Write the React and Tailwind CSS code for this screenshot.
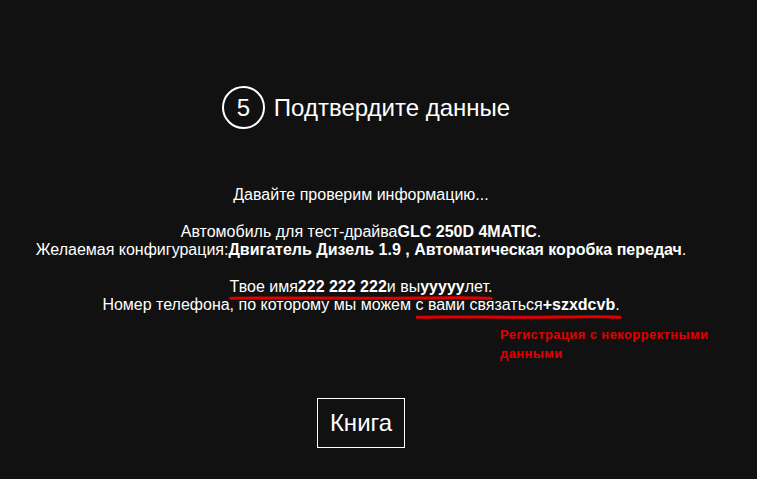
import React from 'react';

// hand-drawn red marker stroke under a piece of text
const Scribble = ({ className }) => (
    <svg className={className} viewBox="0 0 100 6" preserveAspectRatio="none">
        <path d="M1 3.2 C 20 2.4, 45 3.8, 70 3 S 95 2.6, 99 3.4" stroke="#e00000" strokeWidth="3" fill="none" strokeLinecap="round" vectorEffect="non-scaling-stroke" />
    </svg>
);

const App = () => {
    return (
        <div className="relative w-full h-[479px] bg-[#111111] text-white overflow-hidden" style={{ fontFamily: '"Liberation Sans", Arial, sans-serif' }}>
            <div className="flex flex-col items-center w-full pr-[35px] pt-[86px]">
                {/* step header */}
                <div className="flex items-center gap-[9px] ml-[10px]">
                    <div className="w-[43px] h-[43px] rounded-full border-2 border-white flex items-center justify-center text-[24px] leading-none">
                        5
                    </div>
                    <h1 className="text-[24px] leading-[28px] font-normal">Подтвердите данные</h1>
                </div>

                <div className="mt-[57px] text-center text-[16px] leading-[18.4px]">
                    <p>Давайте проверим информацию...</p>
                    <br />
                    <p>Автомобиль для тест-драйва<b>GLC 250D 4MATIC</b>.</p>
                    <p>Желаемая конфигурация:<b>Двигатель Дизель 1.9 , Автоматическая коробка передач</b>.</p>
                    <br />
                    <p>
                        <span className="relative inline-block">
                            Твое имя<b>222 222 222</b>и вы<b>yyyyy</b>лет.
                            <Scribble className="absolute left-[-2px] bottom-[-5px] h-[6px] w-[calc(100%+3px)]" />
                        </span>
                    </p>
                    <p>
                        Номер телефона, по которому мы можем{' '}
                        <span className="relative inline-block">
                            с вами связаться<b>+szxdcvb</b>.
                            <Scribble className="absolute left-0 bottom-[-5px] h-[6px] w-[calc(100%+3px)]" />
                        </span>
                    </p>
                </div>

                <button className="mt-[83px] w-[88px] h-[50px] border border-white text-[24px] text-white flex items-center justify-center">
                    Книга
                </button>
            </div>

            {/* annotation */}
            <div className="absolute left-[500px] top-[325px] w-[230px] text-[13px] leading-[19px] font-bold tracking-[0.4px] text-[#e00000]">
                Регистрация с некорректными<br />данными
            </div>
        </div>
    );
};

export default App;
